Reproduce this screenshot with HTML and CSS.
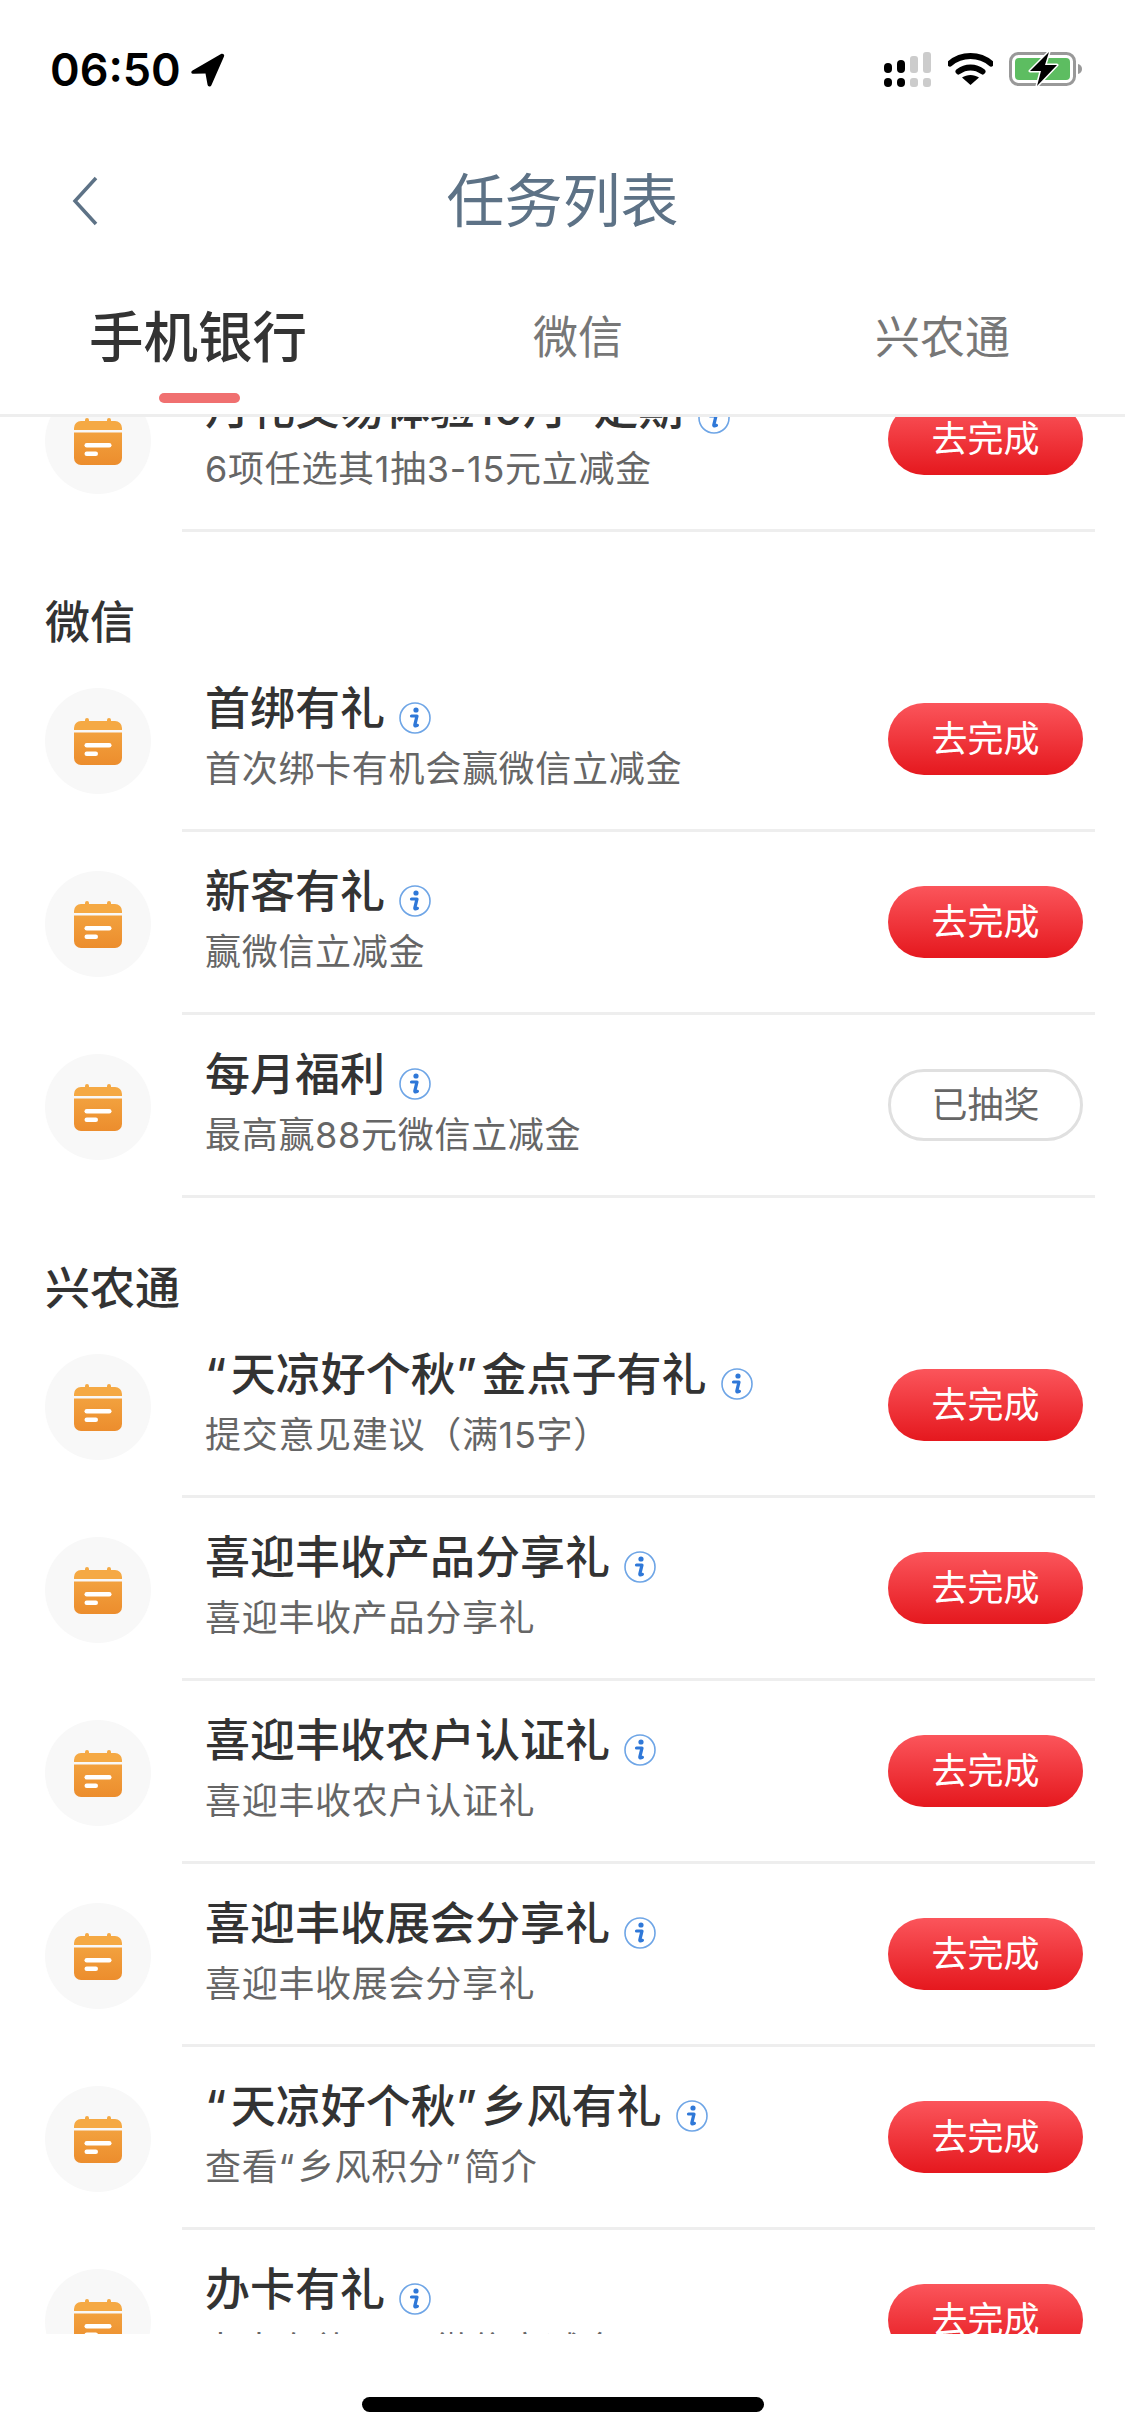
FILE: index.html
```html
<!DOCTYPE html>
<html lang="zh-CN">
<head>
    <meta charset="UTF-8">
    <meta name="viewport" content="width=device-width, initial-scale=1.0">
    <title>任务列表</title>
    <link rel="stylesheet" href="styles.css">
</head>
<body>
    <svg class="icon-defs" width="0" height="0">
        <defs>
            <linearGradient id="calBody" x1="0" y1="0" x2="0" y2="1">
                <stop offset="0" stop-color="#f2a13e"/>
                <stop offset="1" stop-color="#ec8d2d"/>
            </linearGradient>
            <symbol id="cal" viewBox="0 0 48 48">
                <path d="M11 3a2 2 0 0 1 4 0v1h18V3a2 2 0 0 1 4 0v1h4a7 7 0 0 1 7 7v2H0v-2a7 7 0 0 1 7-7h4z" fill="#f5a944"/>
                <path d="M0 15.500h48V41a7 7 0 0 1-7 7H7a7 7 0 0 1-7-7z" fill="url(#calBody)"/>
                <rect x="10.500" y="26" width="27" height="4.500" rx="2.200" fill="#fff"/>
                <rect x="10.500" y="34.500" width="13.500" height="4.500" rx="2.200" fill="#fff"/>
            </symbol>
            <symbol id="info" viewBox="0 0 32 32">
                <circle cx="16" cy="16" r="15" fill="#fff" stroke="#6ea5e6" stroke-width="1.600"/>
                <circle cx="17" cy="8" r="2.600" fill="#2f78d8"/>
                <path d="M12.500 14h5.500l-2.200 9c-.2.9.8 1.200 2.600.3" fill="none" stroke="#2f78d8" stroke-width="3.200" stroke-linecap="round" stroke-linejoin="round"/>
            </symbol>
        </defs>
    </svg>

    <div class="page">
        <header class="header">
            <div class="status-bar">
                <div class="status-left">
                    <span class="clock">06:50</span>
                    <svg class="loc-arrow" viewBox="0 0 34 34">
                        <path d="M1.500 17.500 30 1c2-1 3.800.6 3 2.500L20.500 32c-1 2.300-3.700 2-4-.4L14.500 20.500 3 20.800c-3 0-3.500-2.200-1.500-3.300z" fill="#000"/>
                    </svg>
                </div>
                <div class="status-right">
                    <svg class="signal" viewBox="0 0 47 35">
                        <rect x="0" y="11" width="8" height="10" rx="4" fill="#000"/>
                        <rect x="13" y="8" width="8" height="13" rx="4" fill="#000"/>
                        <rect x="26" y="4" width="8" height="17" rx="3" fill="#ccc"/>
                        <rect x="39" y="0" width="8" height="21" rx="3" fill="#ccc"/>
                        <rect x="0" y="26" width="8" height="9" rx="4" fill="#000"/>
                        <rect x="13" y="26" width="8" height="9" rx="4" fill="#000"/>
                        <rect x="26" y="26" width="8" height="9" rx="3" fill="#ccc"/>
                        <rect x="39" y="26" width="8" height="9" rx="3" fill="#ccc"/>
                    </svg>
                    <svg class="wifi" viewBox="0 0 45 33">
                        <path d="M2 11.500C13.500 1.500 31.500 1.500 43 11.500" fill="none" stroke="#000" stroke-width="6" stroke-linecap="round"/>
                        <path d="M10.500 19.500C17.500 14 27.500 14 34.500 19.500" fill="none" stroke="#000" stroke-width="6" stroke-linecap="round"/>
                        <path d="M22.500 33 14 25.500c5-3.500 12-3.500 17 0z" fill="#000"/>
                    </svg>
                    <svg class="battery" viewBox="0 0 73 34">
                        <rect x="1.500" y="1.500" width="64" height="31" rx="8" fill="#fff" stroke="#999" stroke-width="3"/>
                        <rect x="6" y="6" width="55" height="22" rx="4" fill="#5dbd61"/>
                        <path d="M69 12c3 .5 4 3 4 5s-1 4.500-4 5z" fill="#999"/>
                        <path d="M40 0 21 19h11l-4 15 20-21H36z" fill="#000" stroke="#fff" stroke-width="3" stroke-linejoin="round" paint-order="stroke"/>
                    </svg>
                </div>
            </div>
            <div class="nav-bar">
                <svg class="back" viewBox="0 0 26 50">
                    <path d="M24 2 3 25l21 23" fill="none" stroke="#5d7286" stroke-width="3.500"/>
                </svg>
                <h1 class="nav-title">任务列表</h1>
            </div>
            <div class="tabs">
                <div class="tab tab-active">手机银行</div>
                <div class="tab">微信</div>
                <div class="tab">兴农通</div>
            </div>
        </header>

        <main class="list-window">
            <div class="list">
                <div class="row">
                    <div class="cal-badge"><svg class="cal-icon"><use href="#cal"/></svg></div>
                    <div class="row-body">
                        <div class="row-text">
                            <div class="row-title">月礼交易体验10月<span class="quote">“</span>定期<svg class="info-icon"><use href="#info"/></svg></div>
                            <div class="row-sub">6项任选其1抽3-15元立减金</div>
                        </div>
                        <div class="btn">去完成</div>
                    </div>
                </div>

                <h2 class="section-title">微信</h2>
                <div class="row">
                    <div class="cal-badge"><svg class="cal-icon"><use href="#cal"/></svg></div>
                    <div class="row-body">
                        <div class="row-text">
                            <div class="row-title">首绑有礼<svg class="info-icon"><use href="#info"/></svg></div>
                            <div class="row-sub">首次绑卡有机会赢微信立减金</div>
                        </div>
                        <div class="btn">去完成</div>
                    </div>
                </div>
                <div class="row">
                    <div class="cal-badge"><svg class="cal-icon"><use href="#cal"/></svg></div>
                    <div class="row-body">
                        <div class="row-text">
                            <div class="row-title">新客有礼<svg class="info-icon"><use href="#info"/></svg></div>
                            <div class="row-sub">赢微信立减金</div>
                        </div>
                        <div class="btn">去完成</div>
                    </div>
                </div>
                <div class="row">
                    <div class="cal-badge"><svg class="cal-icon"><use href="#cal"/></svg></div>
                    <div class="row-body">
                        <div class="row-text">
                            <div class="row-title">每月福利<svg class="info-icon"><use href="#info"/></svg></div>
                            <div class="row-sub">最高赢88元微信立减金</div>
                        </div>
                        <div class="btn btn-done">已抽奖</div>
                    </div>
                </div>

                <h2 class="section-title">兴农通</h2>
                <div class="row">
                    <div class="cal-badge"><svg class="cal-icon"><use href="#cal"/></svg></div>
                    <div class="row-body">
                        <div class="row-text">
                            <div class="row-title"><span class="quote">“</span>天凉好个秋<span class="quote">”</span>金点子有礼<svg class="info-icon"><use href="#info"/></svg></div>
                            <div class="row-sub">提交意见建议（满15字）</div>
                        </div>
                        <div class="btn">去完成</div>
                    </div>
                </div>
                <div class="row">
                    <div class="cal-badge"><svg class="cal-icon"><use href="#cal"/></svg></div>
                    <div class="row-body">
                        <div class="row-text">
                            <div class="row-title">喜迎丰收产品分享礼<svg class="info-icon"><use href="#info"/></svg></div>
                            <div class="row-sub">喜迎丰收产品分享礼</div>
                        </div>
                        <div class="btn">去完成</div>
                    </div>
                </div>
                <div class="row">
                    <div class="cal-badge"><svg class="cal-icon"><use href="#cal"/></svg></div>
                    <div class="row-body">
                        <div class="row-text">
                            <div class="row-title">喜迎丰收农户认证礼<svg class="info-icon"><use href="#info"/></svg></div>
                            <div class="row-sub">喜迎丰收农户认证礼</div>
                        </div>
                        <div class="btn">去完成</div>
                    </div>
                </div>
                <div class="row">
                    <div class="cal-badge"><svg class="cal-icon"><use href="#cal"/></svg></div>
                    <div class="row-body">
                        <div class="row-text">
                            <div class="row-title">喜迎丰收展会分享礼<svg class="info-icon"><use href="#info"/></svg></div>
                            <div class="row-sub">喜迎丰收展会分享礼</div>
                        </div>
                        <div class="btn">去完成</div>
                    </div>
                </div>
                <div class="row">
                    <div class="cal-badge"><svg class="cal-icon"><use href="#cal"/></svg></div>
                    <div class="row-body">
                        <div class="row-text">
                            <div class="row-title"><span class="quote">“</span>天凉好个秋<span class="quote">”</span>乡风有礼<svg class="info-icon"><use href="#info"/></svg></div>
                            <div class="row-sub">查看<span class="quote">“</span>乡风积分<span class="quote">”</span>简介</div>
                        </div>
                        <div class="btn">去完成</div>
                    </div>
                </div>
                <div class="row">
                    <div class="cal-badge"><svg class="cal-icon"><use href="#cal"/></svg></div>
                    <div class="row-body">
                        <div class="row-text">
                            <div class="row-title">办卡有礼<svg class="info-icon"><use href="#info"/></svg></div>
                            <div class="row-sub">办卡有礼88元微信立减金</div>
                        </div>
                        <div class="btn">去完成</div>
                    </div>
                </div>
            </div>
        </main>

        <footer class="home-area">
            <div class="home-bar"></div>
        </footer>
    </div>
</body>
</html>
```

FILE: styles.css
```css
* {
    box-sizing: border-box;
}
body {
    margin: 0;
    background-color: white;
    font-family: Inter, "Noto Sans CJK SC", "Noto Sans", sans-serif;
}
.icon-defs {
    position: absolute;
}
.page {
    width: 1125px;
    height: 2436px;
    display: flex;
    flex-direction: column;
    overflow: hidden;
}
.header {
    height: 417px;
    border-bottom: 3px solid #eeeeee;
    flex-shrink: 0;
}
.status-bar {
    height: 130px;
    display: flex;
    justify-content: space-between;
    align-items: flex-start;
    padding: 52px 43px 0 50px;
}
.status-left {
    display: flex;
    align-items: center;
    height: 35px;
}
.clock {
    font-weight: 600;
    font-size: 45px;
    line-height: 33px;
    color: #000;
}
.loc-arrow {
    width: 34px;
    height: 34px;
    margin-left: 10px;
}
.status-right {
    display: flex;
    align-items: flex-start;
}
.signal {
    width: 47px;
    height: 35px;
}
.wifi {
    width: 45px;
    height: 33px;
    margin-left: 17px;
}
.battery {
    width: 73px;
    height: 34px;
    margin-left: 16px;
}
.nav-bar {
    height: 140px;
    padding-bottom: 6px;
    display: flex;
    align-items: center;
    justify-content: center;
    position: relative;
}
.back {
    position: absolute;
    left: 72px;
    top: 46px;
    width: 26px;
    height: 50px;
}
.nav-title {
    margin: 0;
    font-size: 58px;
    font-weight: 400;
    color: #5d7286;
}
.tabs {
    display: grid;
    grid-template-columns: 396px 364px 365px;
    height: 144px;
}
.tab {
    text-align: center;
    height: 130px;
    line-height: 136px;
    color: #777777;
    font-size: 45px;
}
.tab-active {
    position: relative;
    font-size: 54.5px;
    line-height: 134px;
    font-weight: 500;
    color: #333333;
}
.tab-active::after {
    content: "";
    position: absolute;
    left: 159px;
    top: 123px;
    width: 81px;
    height: 10px;
    border-radius: 5px;
    background-color: #f07070;
}
.list-window {
    height: 1917px;
    overflow: hidden;
    flex-shrink: 0;
}
.list {
    margin-top: -68px;
}
.section-title {
    margin: 0;
    height: 117px;
    padding-left: 45px;
    padding-top: 60px;
    font-size: 45px;
    line-height: 62px;
    font-weight: 500;
    color: #333333;
}
.row {
    display: flex;
    height: 183px;
}
.cal-badge {
    width: 106px;
    height: 106px;
    margin: 39px 31px 0 45px;
    border-radius: 50%;
    background-color: #f8f8f8;
    display: flex;
    align-items: center;
    justify-content: center;
    flex-shrink: 0;
}
.cal-icon {
    width: 48px;
    height: 48px;
}
.row-body {
    flex: 1;
    margin-right: 30px;
    padding-left: 23px;
    padding-right: 12px;
    display: flex;
    align-items: center;
    justify-content: space-between;
    border-bottom: 3px solid #eeeeee;
}
.row-text {
    margin-top: -6px;
}
.row-title {
    height: 60px;
    font-size: 45px;
    line-height: 60px;
    font-weight: 500;
    color: #333333;
}
.quote {
    letter-spacing: 0.1em;
}
.info-icon {
    width: 32px;
    height: 32px;
    margin-left: 14px;
    vertical-align: -9px;
}
.row-sub {
    margin-top: 5px;
    font-size: 36px;
    letter-spacing: 0.7px;
    line-height: 50px;
    color: #666666;
}
.btn {
    width: 195px;
    height: 72px;
    border-radius: 36px;
    background: linear-gradient(#fb555b, #e5181e);
    color: white;
    font-size: 36px;
    line-height: 72px;
    text-align: center;
    flex-shrink: 0;
}
.btn-done {
    background: white;
    border: 3px solid #e0e0e0;
    line-height: 66px;
    color: #666666;
}
.home-area {
    flex: 1;
    padding-top: 63px;
    display: flex;
    justify-content: center;
}
.home-bar {
    width: 402px;
    height: 15px;
    border-radius: 8px;
    background-color: #000;
}
```
